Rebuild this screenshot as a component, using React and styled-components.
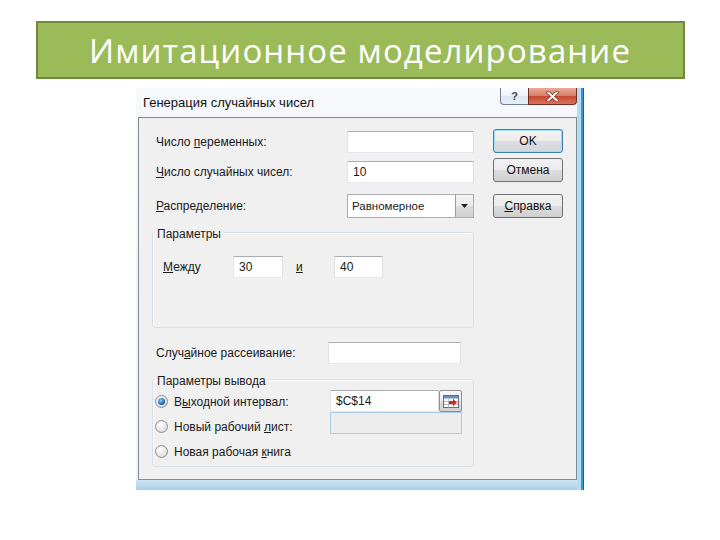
import React from "react";
import styled, { createGlobalStyle, css } from "styled-components";

const GlobalStyle = createGlobalStyle`
  body {
    margin: 0;
    background: #fff;
    font-family: "Liberation Sans", Arial, sans-serif;
  }
`;

const Page = styled.div`
  width: 720px;
  height: 540px;
  display: flex;
  flex-direction: column;
  align-items: center;
  padding-top: 21px;
  box-sizing: border-box;
`;

const Banner = styled.div`
  width: 649px;
  height: 58px;
  box-sizing: border-box;
  background: #9bbb59;
  border: 2px solid #71893f;
  display: flex;
  align-items: center;
  justify-content: center;
  h1 {
    margin: 0;
    color: #fff;
    font-family: "Open Sans", sans-serif;
    font-weight: 400;
    font-size: 33px;
    letter-spacing: 1.1px;
  }
`;

const Window = styled.div`
  width: 448px;
  height: 402px;
  margin-top: 9px;
  box-sizing: border-box;
  display: flex;
  flex-direction: column;
  background:
    linear-gradient(to left, #1d5f92 0 1px, #3b97d3 1px 3px, #b4dcf2 3px 7px, transparent 7px),
    linear-gradient(to bottom, #f6f8fb 0, #eef3f8 calc(100% - 10px), #cfe5f4 calc(100% - 10px), #a9cfe9 100%);
`;

const TitleBar = styled.div`
  height: 29px;
  display: flex;
  align-items: flex-start;
  padding: 0 7px 0 7px;
  span {
    flex: 1;
    padding-top: 7px;
    font-size: 13px;
    line-height: 15px;
    color: #111;
  }
`;

const CaptionButton = styled.div`
  height: 17px;
  box-sizing: border-box;
  display: flex;
  align-items: center;
  justify-content: center;
  border: 1px solid #6f7f90;
  border-top: none;
  ${(p) =>
    p.$close
      ? css`
          width: 49px;
          border-color: #6d2f25;
          border-radius: 0 0 4px 0;
          background: linear-gradient(to bottom, #e9a999 0%, #d77e68 50%, #c6472f 50%, #d9735a 100%);
        `
      : css`
          width: 28px;
          border-right: none;
          border-radius: 0 0 0 4px;
          background: linear-gradient(to bottom, #fbfdfe 0%, #eef3f8 50%, #dde6ef 50%, #e7eef5 100%);
          color: #3b4450;
          font-weight: bold;
          font-size: 11px;
        `}
`;

const Frame = styled.div`
  flex: 1;
  display: flex;
  padding: 0 7px 10px 2px;
`;

const Client = styled.div`
  flex: 1;
  display: flex;
  background: #f0f0f0;
  border: 1px solid #7d8a98;
  font-size: 12px;
  color: #1a1a1a;
`;

const LeftColumn = styled.div`
  width: 335px;
  padding-top: 12px;
  display: flex;
  flex-direction: column;
`;

const FieldRow = styled.div`
  display: flex;
  align-items: center;
  padding-left: 17px;
  margin-top: ${(p) => p.$gap || 0}px;
  label {
    flex: ${(p) => (p.$labelWidth ? "none" : 1)};
    width: ${(p) => (p.$labelWidth ? `${p.$labelWidth}px` : "auto")};
  }
`;

const TextBox = styled.div`
  width: ${(p) => p.$w}px;
  height: 22px;
  box-sizing: border-box;
  background: ${(p) => (p.$disabled ? "#ededed" : "#fff")};
  border: 1px solid;
  border-color: ${(p) =>
    p.$disabled ? "#a9c9e8" : "#abadb3 #dbdfe6 #e3e9ef #e2e3ea"};
  display: flex;
  align-items: center;
  padding: 0 5px;
  font-size: 12px;
`;

const Select = styled.div`
  width: 127px;
  height: 24px;
  box-sizing: border-box;
  background: #fff;
  border: 1px solid #abadb3;
  display: flex;
  align-items: stretch;
  span {
    flex: 1;
    display: flex;
    align-items: center;
    padding-left: 4px;
    font-size: 11.5px;
  }
`;

const DropButton = styled.div`
  width: 17px;
  display: flex;
  align-items: center;
  justify-content: center;
  border-left: 1px solid #9aa0a8;
  background: linear-gradient(to bottom, #f2f2f2 0%, #ebebeb 50%, #dcdcdc 50%, #cfcfcf 100%);
`;

const Group = styled.fieldset`
  margin: ${(p) => p.$gap}px 0 0 13px;
  width: 322px;
  box-sizing: border-box;
  padding: 0 0 ${(p) => p.$bottom}px 0;
  border: 1px solid #d5dfe5;
  border-radius: 3px;
  box-shadow: inset 1px 1px 0 #fff;
  legend {
    margin-left: 2px;
    padding: 4px 2px 0;
    line-height: 14px;
    color: #1a1a1a;
  }
`;

const BetweenRow = styled.div`
  display: flex;
  align-items: center;
  margin-top: 15px;
  padding-left: 10px;
`;

const Label = styled.label`
  width: ${(p) => p.$w}px;
  flex: none;
  padding-left: ${(p) => p.$pad || 0}px;
  box-sizing: border-box;
`;

const OutputBody = styled.div`
  display: flex;
  align-items: flex-start;
`;

const RadioList = styled.div`
  width: 175px;
  padding: 1px 0 2px 2px;
  display: flex;
  flex-direction: column;
`;

const RadioRow = styled.div`
  height: 25px;
  display: flex;
  align-items: center;
  gap: 6px;
`;

const RadioCircle = styled.span`
  width: 13px;
  height: 13px;
  box-sizing: border-box;
  border-radius: 50%;
  border: 1px solid #8e8f8f;
  background: radial-gradient(circle at 40% 35%, #fff 0%, #e4e4e4 60%, #c9c9c9 100%);
  display: flex;
  align-items: center;
  justify-content: center;
`;

const RadioDot = styled.span`
  width: 7px;
  height: 7px;
  border-radius: 50%;
  background: radial-gradient(circle at 40% 35%, #8fd0f7 0%, #2a6fb6 55%, #173d74 100%);
`;

const InputStack = styled.div`
  margin-top: 2px;
  display: flex;
  flex-direction: column;
`;

const RefRow = styled.div`
  display: flex;
`;

const RefButton = styled.div`
  width: 23px;
  height: 22px;
  box-sizing: border-box;
  border: 1px solid #8e8f8f;
  border-radius: 2px;
  background: linear-gradient(to bottom, #f7f7f7 0%, #ececec 50%, #dddddd 50%, #d2d2d2 100%);
  display: flex;
  align-items: center;
  justify-content: center;
`;

const ButtonColumn = styled.div`
  padding: 11px 0 0 19px;
  display: flex;
  flex-direction: column;
`;

const Button = styled.button`
  width: 70px;
  height: 24px;
  margin-top: ${(p) => p.$gap || 0}px;
  padding: 0;
  font-family: "Liberation Sans", Arial, sans-serif;
  font-size: 12px;
  color: #111;
  border: 1px solid #707070;
  border-radius: 3px;
  background: linear-gradient(to bottom, #f2f2f2 0%, #ebebeb 50%, #dddddd 50%, #cfcfcf 100%);
  ${(p) =>
    p.$default &&
    css`
      border-color: #3c7fb1;
      box-shadow: inset 0 0 0 1px #9fdcf8;
      background: linear-gradient(to bottom, #f6f4f4 0%, #eeeaea 50%, #dcdde2 50%, #d2d6de 100%);
    `}
`;

const u = (s) => <u>{s}</u>;

function RefIcon() {
  return (
    <svg width="16" height="13" viewBox="0 0 16 13">
      <rect x="0.5" y="0.5" width="15" height="12" fill="#fff" stroke="#5f6d7c" />
      <rect x="1" y="1" width="14" height="2.5" fill="#6b8fbf" />
      <path d="M1 6.5H15M1 9.5H15M5.5 3.5V12.5M10.5 3.5V12.5" stroke="#b5bcc5" strokeWidth="1" />
      <path d="M6 6H10V4L14 7.5L10 11V9H6Z" fill="#d8261f" />
    </svg>
  );
}

export default function App() {
  return (
    <>
      <GlobalStyle />
      <Page>
        <Banner>
          <h1>Имитационное моделирование</h1>
        </Banner>
        <Window>
          <TitleBar>
            <span>Генерация случайных чисел</span>
            <CaptionButton>?</CaptionButton>
            <CaptionButton $close>
              <svg width="13" height="11" viewBox="0 0 13 11">
                <path d="M2 1.5L11 9.5M11 1.5L2 9.5" stroke="#7a2a1e" strokeWidth="3.4" strokeLinecap="round" />
                <path d="M2 1.5L11 9.5M11 1.5L2 9.5" stroke="#fff" strokeWidth="2" strokeLinecap="round" />
              </svg>
            </CaptionButton>
          </TitleBar>
          <Frame>
            <Client>
              <LeftColumn>
                <FieldRow $gap={1}>
                  <label>Число {u("п")}еременных:</label>
                  <TextBox $w={127} />
                </FieldRow>
                <FieldRow $gap={8}>
                  <label>{u("Ч")}исло случайных чисел:</label>
                  <TextBox $w={127}>10</TextBox>
                </FieldRow>
                <FieldRow $gap={11}>
                  <label>{u("Р")}аспределение:</label>
                  <Select>
                    <span>Равномерное</span>
                    <DropButton>
                      <svg width="7" height="4" viewBox="0 0 7 4">
                        <path d="M0 0H7L3.5 4Z" fill="#222" />
                      </svg>
                    </DropButton>
                  </Select>
                </FieldRow>
                <Group $gap={5} $bottom={49}>
                  <legend>Параметры</legend>
                  <BetweenRow>
                    <Label $w={70}>{u("М")}ежду</Label>
                    <TextBox $w={50}>30</TextBox>
                    <Label $w={51} $pad={13}>{u("и")}</Label>
                    <TextBox $w={49}>40</TextBox>
                  </BetweenRow>
                </Group>
                <FieldRow $gap={14} $labelWidth={172}>
                  <label>Случ{u("а")}йное рассеивание:</label>
                  <TextBox $w={133} />
                </FieldRow>
                <Group $gap={6} $bottom={0}>
                  <legend>Параметры вывода</legend>
                  <OutputBody>
                    <RadioList>
                      <RadioRow>
                        <RadioCircle>
                          <RadioDot />
                        </RadioCircle>
                        <span>В{u("ы")}ходной интервал:</span>
                      </RadioRow>
                      <RadioRow>
                        <RadioCircle />
                        <span>Новый рабочий {u("л")}ист:</span>
                      </RadioRow>
                      <RadioRow>
                        <RadioCircle />
                        <span>Новая рабочая {u("к")}нига</span>
                      </RadioRow>
                    </RadioList>
                    <InputStack>
                      <RefRow>
                        <TextBox $w={109}>$C$14</TextBox>
                        <RefButton>
                          <RefIcon />
                        </RefButton>
                      </RefRow>
                      <TextBox $w={132} $disabled />
                    </InputStack>
                  </OutputBody>
                </Group>
              </LeftColumn>
              <ButtonColumn>
                <Button $default>OK</Button>
                <Button $gap={5}>Отмена</Button>
                <Button $gap={12}>{u("С")}правка</Button>
              </ButtonColumn>
            </Client>
          </Frame>
        </Window>
      </Page>
    </>
  );
}
